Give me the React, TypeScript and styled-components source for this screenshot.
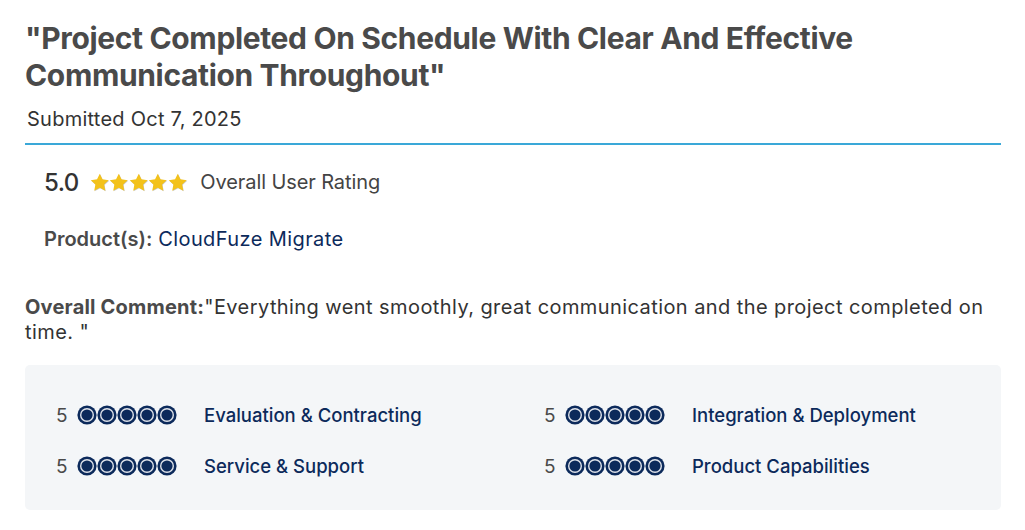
import React from 'react';
import styled, { createGlobalStyle } from 'styled-components';

const GlobalStyle = createGlobalStyle`
  * { box-sizing: border-box; }
  body {
    margin: 0;
    background: #ffffff;
    font-family: Inter, "Noto Sans", sans-serif;
    color: #333333;
  }
`;

const Page = styled.div`
  width: 1025px;
  padding: 20px 24px 0 25px;
`;

const Title = styled.h1`
  margin: 0;
  font-size: 30px;
  line-height: 37px;
  font-weight: 700;
  color: #4a4a4a;
  letter-spacing: -0.35px;
`;

const Submitted = styled.div`
  margin-top: 13px;
  padding: 0 0 12px 2px;
  font-size: 20px;
  line-height: 24px;
  letter-spacing: 0.25px;
  color: #333333;
  border-bottom: 2px solid #3aa8d8;
`;

const Summary = styled.div`
  padding: 24px 0 0 19px;
  display: flex;
  flex-direction: column;
  gap: 32px;
`;

const RatingRow = styled.div`
  display: flex;
  align-items: center;
  height: 26px;
`;

const Score = styled.span`
  font-size: 24px;
  font-weight: 500;
  color: #333333;
  letter-spacing: -0.5px;
  margin-right: 11px;
`;

const Stars = styled.span`
  display: flex;
  margin-right: 13px;
`;

const RatingLabel = styled.span`
  font-size: 20px;
  letter-spacing: -0.1px;
  color: #444444;
`;

const ProductRow = styled.div`
  font-size: 20px;
  line-height: 24px;
  letter-spacing: 0.3px;
`;

const FieldLabel = styled.span<{ $bold?: boolean }>`
  font-weight: ${({ $bold }) => ($bold ? 700 : 600)};
  color: #4a4a4a;
  letter-spacing: ${({ $bold }) => ($bold ? '0.2px' : '0')};
`;

const ProductName = styled.span`
  color: #0c2a5b;
  letter-spacing: 0.4px;
`;

const Comment = styled.p`
  margin: 44px 0 0 0;
  font-size: 20px;
  line-height: 25px;
  letter-spacing: 0.42px;
  color: #333333;
`;

const CommentText = styled.span`
  color: #333333;
`;

const ScoresBox = styled.div`
  margin-top: 20px;
  width: 976px;
  background: #f4f6f8;
  border-radius: 5px;
  padding: 38px 31px 32px 31px;
  display: grid;
  grid-template-columns: 1fr 1fr;
  column-gap: 62px;
  row-gap: 27px;
`;

const ScoreItem = styled.div`
  display: flex;
  align-items: center;
  height: 24px;
`;

const ScoreNum = styled.span`
  font-size: 19px;
  color: #4a4a4a;
  width: 21px;
`;

const Dots = styled.span`
  display: flex;
  width: 127px;
`;

const ScoreLabel = styled.span`
  font-size: 18.5px;
  font-weight: 500;
  color: #0c2a5b;
`;

const STAR =
  'M12 .8l3.4 7.2 7.9 1-5.8 5.5 1.5 7.8L12 18.5l-7 3.8 1.5-7.8L.7 9l7.9-1z';

const Star = () => (
  <svg width="19.5" height="19" viewBox="0 0 24 24">
    <path d={STAR} fill="#c9c9c9" transform="translate(0.6 0.8)" />
    <path d={STAR} fill="#f3c21b" />
  </svg>
);

const Dot = () => (
  <svg width="20" height="20" viewBox="0 0 20 20">
    <circle cx="10" cy="10" r="9.6" fill="#0c2a5b" />
    <circle cx="10" cy="10" r="7" fill="#dfe3ea" />
    <circle cx="10" cy="10" r="5.6" fill="#0c2a5b" />
  </svg>
);

const scores = [
  { value: 5, label: 'Evaluation & Contracting' },
  { value: 5, label: 'Integration & Deployment' },
  { value: 5, label: 'Service & Support' },
  { value: 5, label: 'Product Capabilities' },
];

export default function App() {
  return (
    <Page>
      <GlobalStyle />
      <Title>
        "Project Completed On Schedule With Clear And Effective Communication Throughout"
      </Title>
      <Submitted>Submitted Oct 7, 2025</Submitted>
      <Summary>
        <RatingRow>
          <Score>5.0</Score>
          <Stars>
            {[0, 1, 2, 3, 4].map((i) => (
              <Star key={i} />
            ))}
          </Stars>
          <RatingLabel>Overall User Rating</RatingLabel>
        </RatingRow>
        <ProductRow>
          <FieldLabel>Product(s):</FieldLabel> <ProductName>CloudFuze Migrate</ProductName>
        </ProductRow>
      </Summary>
      <Comment>
        <FieldLabel $bold>Overall Comment:</FieldLabel>
        <CommentText>
          "Everything went smoothly, great communication and the project completed on time. "
        </CommentText>
      </Comment>
      <ScoresBox>
        {scores.map((s) => (
          <ScoreItem key={s.label}>
            <ScoreNum>{s.value}</ScoreNum>
            <Dots>
              {Array.from({ length: s.value }).map((_, i) => (
                <Dot key={i} />
              ))}
            </Dots>
            <ScoreLabel>{s.label}</ScoreLabel>
          </ScoreItem>
        ))}
      </ScoresBox>
    </Page>
  );
}
